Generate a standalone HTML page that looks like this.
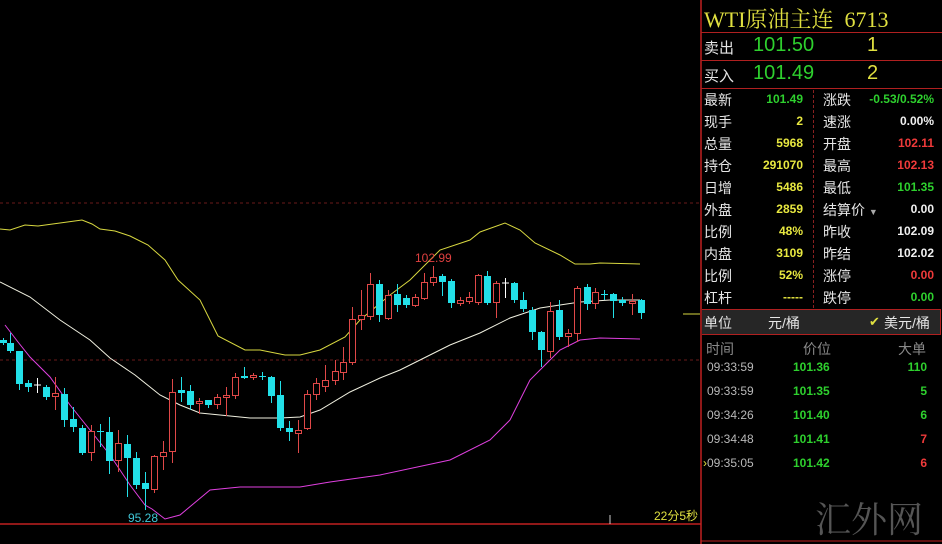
<!DOCTYPE html>
<html><head><meta charset="utf-8"><style>
body{margin:0;background:#000;width:942px;height:544px;overflow:hidden;position:relative;font-family:"Liberation Sans","Noto Sans CJK SC",sans-serif;}
.p{position:absolute;white-space:nowrap}
.l{color:#e6e6e6;font-size:14px}
.y{color:#e8e840;font-weight:bold;font-size:12px}
.g{color:#2ed02e;font-weight:bold;font-size:12px}
.r{color:#f03a3a;font-weight:bold;font-size:12px}
.w{color:#f0f0f0;font-weight:bold;font-size:12px}
.hl{position:absolute;left:701px;width:241px;height:1px;background:#b02020}
</style></head><body>
<svg id="c" width="942" height="544" style="position:absolute;left:0;top:0">
<line x1="0" y1="203" x2="700" y2="203" stroke="#6a1a1a" stroke-dasharray="3,3"/>
<line x1="0" y1="360" x2="700" y2="360" stroke="#6a1a1a" stroke-dasharray="3,3"/>
<line x1="0" y1="524" x2="701" y2="524" stroke="#c02020" stroke-width="1.5"/>
<line x1="701" y1="0" x2="701" y2="544" stroke="#c02020" stroke-width="1.5"/>
<line x1="701" y1="541" x2="942" y2="541" stroke="#c02020"/>
<line x1="683" y1="314" x2="700" y2="314" stroke="#d8d840"/>
<line x1="610" y1="515" x2="610" y2="524" stroke="#ccc"/>
<polyline fill="none" stroke="#d8d840" points="0,229 10,230 25,225 38,226 60,223 82,220 92,224 100,229 115,231 130,236 148,245 165,260 178,280 200,300 218,336 245,350 260,350 285,355 300,355 320,350 345,337 360,320 390,295 410,280 440,250 470,240 480,232 505,223 520,230 535,243 560,255 575,264 590,264 600,263 640,264"/>
<polyline fill="none" stroke="#f0f0e0" points="0,282 30,297 60,320 90,340 110,358 135,375 160,395 180,405 200,413 220,415 250,418 280,418 300,417 320,410 350,392 380,378 400,370 430,355 450,345 480,333 510,318 540,308 580,302 610,300 640,300"/>
<polyline fill="none" stroke="#e040e0" points="5,325 18,342 30,357 50,377 70,405 90,430 110,455 130,485 145,505 152,509 165,519 180,515 210,490 240,487 300,487 330,482 380,475 450,460 490,440 510,420 530,380 545,365 560,350 580,340 600,338 640,339"/>
<g id="k"></g>
<text x="415" y="262" fill="#e04040" font-size="12" font-family="Liberation Sans">102.99</text>
<text x="128" y="522" fill="#40c8d8" font-size="12" font-family="Liberation Sans">95.28</text>
<text x="654" y="520" fill="#e0e040" font-size="12" font-family="Liberation Sans,Noto Sans CJK SC">22分5秒</text>
</svg>
<script>
var d=[[3,'c',340,343,338,345],[10,'c',343,351,333,353],[19,'c',351,384,351,390],[28,'c',383,387,380,392],[37,'w',385,386,378,393],[46,'c',387,397,385,400],[55,'r',393,396,377,410],[64,'c',394,420,388,427],[73,'c',419,427,407,432],[82,'c',428,453,425,455],[91,'r',431,452,425,461],[100,'c',431,432,424,447],[109,'c',432,461,417,474],[118,'r',443,460,430,472],[127,'c',444,458,435,497],[136,'c',458,485,452,489],[145,'c',483,489,472,510],[154,'r',456,489,455,493],[163,'r',452,456,441,470],[172,'r',392,451,379,463],[181,'c',390,393,377,402],[190,'c',391,405,385,410],[199,'r',401,403,398,414],[208,'c',400,405,400,408],[217,'r',397,404,394,409],[226,'r',395,397,387,416],[235,'r',377,395,373,399],[244,'c',376,378,367,379],[253,'r',375,377,373,380],[262,'c',376,377,372,380],[271,'c',377,396,376,403],[280,'c',395,428,381,431],[289,'c',428,432,421,441],[298,'r',430,433,420,453],[307,'r',394,428,390,430],[316,'r',383,394,378,400],[325,'r',380,386,365,392],[335,'r',371,380,360,385],[343,'r',362,372,347,380],[352,'r',319,362,307,365],[361,'r',315,319,290,330],[370,'r',284,316,273,320],[379,'c',284,315,280,322],[388,'r',295,318,290,320],[397,'c',294,305,284,312],[406,'c',298,305,295,308],[415,'r',297,305,294,307],[424,'r',282,298,273,300],[433,'r',277,282,266,286],[442,'c',276,282,274,296],[451,'c',281,303,279,308],[460,'r',300,303,297,306],[469,'r',297,301,292,304],[478,'r',275,302,274,305],[487,'c',276,303,271,305],[496,'r',283,302,281,318],[505,'w',283,284,278,298],[514,'c',283,300,282,303],[523,'c',300,309,292,312],[532,'c',310,332,307,340],[541,'c',332,350,331,367],[550,'r',311,351,302,358],[559,'c',310,337,300,340],[568,'r',333,336,329,347],[577,'r',288,333,286,342],[587,'c',287,304,284,310],[595,'r',292,303,288,309],[604,'c',294,295,290,300],[613,'c',294,301,293,318],[622,'c',300,303,297,306],[632,'r',301,303,294,315],[641,'c',300,313,299,319]];
var s='';d.forEach(function(a){var col=a[1]=='c'?'#22e0e8':a[1]=='r'?'#e04848':'#fff';var x=a[0];
s+='<line x1="'+(x+0.5)+'" y1="'+a[4]+'" x2="'+(x+0.5)+'" y2="'+a[5]+'" stroke="'+col+'"/>';
var h=Math.max(1,a[3]-a[2]);
if(a[1]=='c')s+='<rect x="'+(x-3)+'" y="'+a[2]+'" width="7" height="'+h+'" fill="'+col+'"/>';
else if(a[1]=='r')s+='<rect x="'+(x-2.5)+'" y="'+(a[2]+0.5)+'" width="6" height="'+h+'" fill="#000" stroke="'+col+'"/>';
else s+='<line x1="'+(x-3)+'" y1="'+a[2]+'" x2="'+(x+4)+'" y2="'+a[2]+'" stroke="#fff"/>';});
document.getElementById('k').innerHTML=s;
</script>
<div class="p" style="left:704px;top:3px;font-family:'Liberation Serif','Noto Serif CJK SC',serif;font-size:22px;color:#e0e040">WTI原油主连&nbsp;&nbsp;6713</div>
<div class="hl" style="top:32px"></div>
<div class="p l" style="left:704px;top:37px;font-size:15px">卖出</div>
<div class="p" style="left:753px;top:34px;font-size:20px;color:#2ed02e">101.50</div>
<div class="p" style="left:867px;top:34px;font-size:20px;color:#e0e040">1</div>
<div class="hl" style="top:60px"></div>
<div class="p l" style="left:704px;top:65px;font-size:15px">买入</div>
<div class="p" style="left:753px;top:62px;font-size:20px;color:#2ed02e">101.49</div>
<div class="p" style="left:867px;top:62px;font-size:20px;color:#e0e040">2</div>
<div class="hl" style="top:88px"></div>
<div style="position:absolute;left:813px;top:90px;height:218px;border-left:1px dashed #8a2020"></div>
<div id="t"></div>
<script>
var rows=[['最新','101.49','g','涨跌','-0.53/0.52%','g'],['现手','2','y','速涨','0.00%','w'],['总量','5968','y','开盘','102.11','r'],['持仓','291070','y','最高','102.13','r'],['日增','5486','y','最低','101.35','g'],['外盘','2859','y','结算价','0.00','w'],['比例','48%','y','昨收','102.09','w'],['内盘','3109','y','昨结','102.02','w'],['比例','52%','y','涨停','0.00','r'],['杠杆','-----','y','跌停','0.00','g']];
var h='';rows.forEach(function(r,i){var t=90+i*22;
h+='<div class="p l" style="left:704px;top:'+t+'px">'+r[0]+'</div>';
h+='<div class="p '+r[2]+'" style="right:139px;top:'+(t+2)+'px">'+r[1]+'</div>';
h+='<div class="p l" style="left:823px;top:'+t+'px">'+r[3]+(i==5?' <span style="font-size:9px;color:#aaa">▼</span>':'')+'</div>';
h+='<div class="p '+r[5]+'" style="right:8px;top:'+(t+2)+'px">'+r[4]+'</div>';});
var tr=[['09:33:59','101.36','110','g'],['09:33:59','101.35','5','g'],['09:34:26','101.40','6','g'],['09:34:48','101.41','7','r'],['09:35:05','101.42','6','r']];
tr.forEach(function(r,i){var t=360+i*24;
h+='<div class="p" style="left:707px;top:'+t+'px;font-size:12px;color:#b8b8b8">'+r[0]+'</div>';
h+='<div class="p g" style="left:793px;top:'+t+'px">'+r[1]+'</div>';
h+='<div class="p '+r[3]+'" style="right:15px;top:'+t+'px">'+r[2]+'</div>';});
document.getElementById('t').innerHTML=h;
</script>
<div class="p" style="left:703px;top:456px;color:#e0e040;font-size:12px">›</div>
<div style="position:absolute;left:702px;top:309px;width:238px;height:24px;background:#262626;border:1px solid #b02020;border-left:none"></div>
<div class="p l" style="left:704px;top:313px">单位</div>
<div class="p l" style="left:768px;top:313px">元/桶</div>
<div class="p" style="left:869px;top:314px;color:#e0e040;font-size:13px">✔</div>
<div class="p l" style="left:884px;top:313px">美元/桶</div>
<div class="p" style="left:706px;top:339px;color:#8a8a8a;font-size:14px">时间</div>
<div class="p" style="left:803px;top:339px;color:#8a8a8a;font-size:14px">价位</div>
<div class="p" style="left:898px;top:339px;color:#8a8a8a;font-size:14px">大单</div>
<div class="p" style="left:815px;top:492px;color:#555;font-size:36px;font-family:'Noto Serif CJK SC',serif">汇外网</div>
</body></html>
